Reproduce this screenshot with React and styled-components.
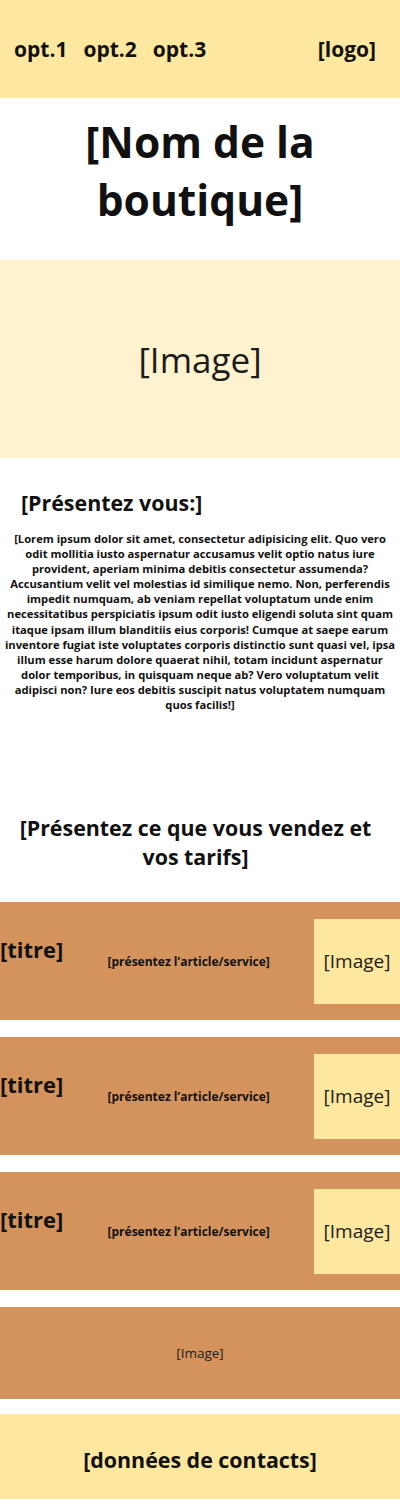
import React from "react";
import styled, { createGlobalStyle } from "styled-components";

const GlobalStyle = createGlobalStyle`
    body {
        margin: 0;
        background: #ffffff;
        font-family: "Open Sans", "Liberation Sans", sans-serif;
        color: #111;
    }
    * {
        box-sizing: border-box;
    }
`;

const Page = styled.div`
    width: 400px;
    display: flex;
    flex-direction: column;
`;

const Header = styled.header`
    height: 98px;
    background: #fee79e;
    display: flex;
    align-items: center;
    justify-content: space-between;
    padding: 0 24px 0 14px;
`;

const Nav = styled.nav`
    display: flex;
    gap: 16px;
`;

const NavLink = styled.a`
    font-size: 21px;
    font-weight: 700;
    color: #111;
    text-decoration: none;
`;

const Logo = styled.div`
    font-size: 21px;
    font-weight: 700;
`;

const TitleBlock = styled.section`
    height: 162px;
    display: flex;
    align-items: center;
    justify-content: center;
    padding-bottom: 16px;
`;

const ShopName = styled.h1`
    margin: 0;
    font-size: 42.5px;
    line-height: 58px;
    font-weight: 700;
    text-align: center;
    width: 260px;
`;

const Hero = styled.div`
    height: 198px;
    background: #fff3cf;
    display: flex;
    align-items: center;
    justify-content: center;
    font-size: 35px;
    color: #1c1c1c;
`;

const About = styled.section`
    padding: 30px 3px 0;
    height: 355px;
`;

const SectionTitle = styled.h2`
    margin: 0;
    font-size: 21.4px;
    font-weight: 700;
    line-height: 30px;
    text-align: ${(props) => (props.center ? "center" : "left")};
    padding: ${(props) => (props.center ? "0 9px 0 0" : "0 0 0 18px")};
`;

const Paragraph = styled.p`
    margin: 13px 0 0;
    font-size: 11.2px;
    line-height: 15.1px;
    font-weight: 700;
    text-align: center;
`;

const Offers = styled.section`
    display: flex;
    flex-direction: column;
    gap: 17px;
`;

const OffersTitle = styled(SectionTitle)`
    margin-bottom: 14px;
    line-height: 29px;
`;

const Card = styled.div`
    height: 118px;
    background: #d4935c;
    display: flex;
    align-items: center;
    justify-content: space-between;
`;

const CardTitle = styled.div`
    font-size: 22px;
    font-weight: 700;
    margin-bottom: 24px;
`;

const CardText = styled.div`
    font-size: 12px;
    font-weight: 700;
`;

const Thumb = styled.div`
    width: 86px;
    height: 85px;
    background: #fee79e;
    display: flex;
    align-items: center;
    justify-content: center;
    font-size: 19px;
    color: #1c1c1c;
`;

const WideImage = styled.div`
    height: 92px;
    background: #d4935c;
    display: flex;
    align-items: center;
    justify-content: center;
    font-size: 13.5px;
    color: #222;
`;

const Footer = styled.footer`
    margin-top: 15px;
    height: 85px;
    background: #fee79e;
    display: flex;
    align-items: center;
    justify-content: center;
    padding-top: 5px;
    font-size: 21.4px;
    font-weight: 700;
`;

const lorem =
    "[Lorem ipsum dolor sit amet, consectetur adipisicing elit. Quo vero odit mollitia iusto aspernatur accusamus velit optio natus iure provident, aperiam minima debitis consectetur assumenda? Accusantium velit vel molestias id similique nemo. Non, perferendis impedit numquam, ab veniam repellat voluptatum unde enim necessitatibus perspiciatis ipsum odit iusto eligendi soluta sint quam itaque ipsam illum blanditiis eius corporis! Cumque at saepe earum inventore fugiat iste voluptates corporis distinctio sunt quasi vel, ipsa illum esse harum dolore quaerat nihil, totam incidunt aspernatur dolor temporibus, in quisquam neque ab? Vero voluptatum velit adipisci non? Iure eos debitis suscipit natus voluptatem numquam quos facilis!]";

const items = [1, 2, 3];

const App = () => {
    return (
        <Page>
            <GlobalStyle />
            <Header>
                <Nav>
                    <NavLink>opt.1</NavLink>
                    <NavLink>opt.2</NavLink>
                    <NavLink>opt.3</NavLink>
                </Nav>
                <Logo>[logo]</Logo>
            </Header>
            <TitleBlock>
                <ShopName>[Nom de la boutique]</ShopName>
            </TitleBlock>
            <Hero>[Image]</Hero>
            <About>
                <SectionTitle>[Présentez vous:]</SectionTitle>
                <Paragraph>{lorem}</Paragraph>
            </About>
            <Offers>
                <OffersTitle center>
                    [Présentez ce que vous vendez et vos tarifs]
                </OffersTitle>
                {items.map((i) => (
                    <Card key={i}>
                        <CardTitle>[titre]</CardTitle>
                        <CardText>[présentez l’article/service]</CardText>
                        <Thumb>[Image]</Thumb>
                    </Card>
                ))}
                <WideImage>[Image]</WideImage>
            </Offers>
            <Footer>[données de contacts]</Footer>
        </Page>
    );
};

export default App;
